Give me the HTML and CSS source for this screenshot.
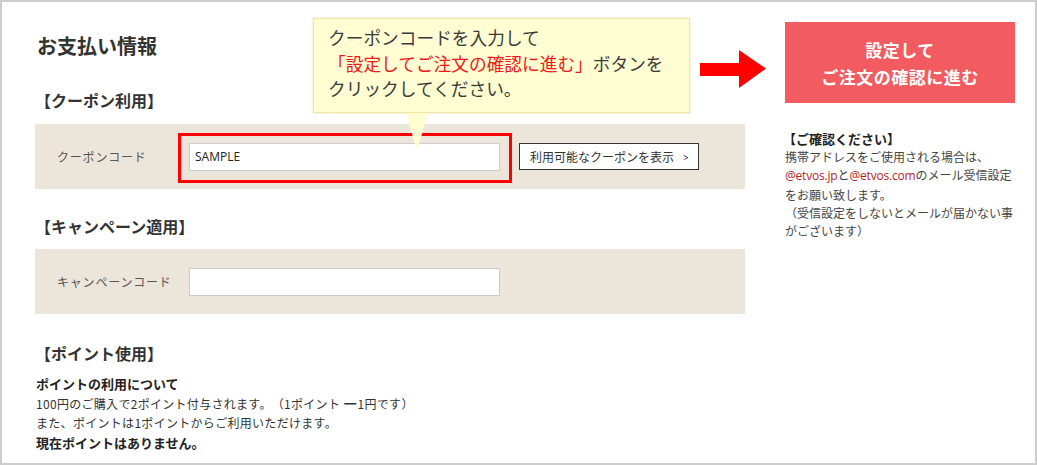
FILE: index.html
```html
<!DOCTYPE html>
<html lang="ja">
<head>
<meta charset="utf-8">
<title>お支払い情報</title>
<link rel="stylesheet" href="styles.css">
</head>
<body>
<div class="frame">
  <div class="main">
    <h1 class="title">お支払い情報</h1>

    <h2 class="sec-head">【クーポン利用】</h2>
    <div class="panel">
      <span class="panel-label">クーポンコード</span>
      <div class="highlight"><input class="code-input" type="text" value="SAMPLE"></div>
      <button class="coupon-btn" type="button">利用可能なクーポンを表示<span class="chev">&gt;</span></button>
    </div>

    <h2 class="sec-head sec-campaign">【キャンペーン適用】</h2>
    <div class="panel">
      <span class="panel-label">キャンペーンコード</span>
      <input class="code-input" type="text" value="">
    </div>

    <h2 class="sec-head sec-point">【ポイント使用】</h2>
    <div class="points">
      <p class="points-strong">ポイントの利用について</p>
      <p>100円のご購入で2ポイント付与されます。（1ポイント<span class="eq">━</span>1円です）</p>
      <p>また、ポイントは1ポイントからご利用いただけます。</p>
      <p class="points-strong">現在ポイントはありません。</p>
    </div>
  </div>

  <aside class="side">
    <button class="submit-btn" type="button">設定して<br>ご注文の確認に進む</button>
    <div class="notice">
      <p class="notice-head">【ご確認ください】</p>
      <p>携帯アドレスをご使用される場合は、<br><span class="mail">@etvos.jp</span>と<span class="mail">@etvos.com</span>のメール受信設定<br>をお願い致します。<br>（受信設定をしないとメールが届かない事<br>がございます）</p>
    </div>
  </aside>

  <div class="callout">
    クーポンコードを入力して<br><span class="callout-red">「設定してご注文の確認に進む」</span>ボタンを<br>クリックしてください。
  </div>

  <svg class="arrow" width="66" height="38" viewBox="0 0 66 38" aria-hidden="true">
    <polygon points="0,13 39,13 39,0 66,18.5 39,38 39,26 0,26" fill="#ff0000"/>
  </svg>
</div>
</body>
</html>
```

FILE: styles.css
```css
* {
  box-sizing: border-box;
}

html, body {
  margin: 0;
  padding: 0;
  background: #ffffff;
}

body {
  font-family: "Noto Sans CJK JP", "Noto Sans", sans-serif;
  color: #333333;
  text-spacing-trim: space-all;
}

p, h1, h2 {
  margin: 0;
}

.frame {
  position: relative;
  width: 1037px;
  height: 465px;
  border: 2px solid #cdcdcd;
  padding: 20px 0 0 33px;
  display: flex;
  gap: 40px;
  overflow: hidden;
}

/* ---------- main column ---------- */
.main {
  width: 710px;
  padding-top: 11px;
}

.title {
  font-size: 20px;
  line-height: 26px;
  font-weight: 700;
  color: #333333;
  padding-left: 2px;
}

.sec-head {
  font-size: 16px;
  line-height: 22px;
  font-weight: 700;
  color: #333333;
  margin-top: 30px;
  margin-bottom: 13px;
}

.sec-campaign {
  margin-top: 26px;
  margin-bottom: 12px;
}

.sec-point {
  margin-top: 28px;
  margin-bottom: 10px;
}

.panel {
  background: #ece5da;
  height: 65px;
  display: flex;
  align-items: center;
  padding-left: 22px;
}

.panel-label {
  width: 132px;
  font-size: 12px;
  letter-spacing: 0.8px;
  color: #555555;
}

.code-input {
  width: 311px;
  height: 28px;
  border: 1px solid #cccccc;
  background: #ffffff;
  padding: 0 5px;
  font-family: "Open Sans", "Noto Sans CJK JP", sans-serif;
  font-size: 12px;
  color: #222222;
  outline: none;
}

.highlight {
  position: relative;
  display: flex;
}

.highlight::after {
  content: "";
  position: absolute;
  left: -11px;
  right: -12px;
  top: -10px;
  bottom: -12px;
  border: 3px solid #ff0000;
  pointer-events: none;
}

.coupon-btn {
  margin-left: 19px;
  height: 27px;
  border: 1px solid #333333;
  background: #ffffff;
  padding: 0 9px 0 10px;
  font-family: "Noto Sans CJK JP", sans-serif;
  font-size: 12px;
  color: #333333;
  display: flex;
  align-items: center;
  gap: 9px;
}

.chev {
  font-size: 11px;
  transform: scaleX(0.8);
}

.points {
  font-size: 12px;
  line-height: 19.5px;
  letter-spacing: 0.3px;
  color: #333333;
  padding-left: 1px;
}

.points-strong {
  font-weight: 700;
  font-size: 13px;
  letter-spacing: 0;
  color: #222222;
}

.eq {
  font-weight: 700;
  margin: 0 1px 0 4px;
}

/* ---------- side column ---------- */
.side {
  width: 230px;
  display: flex;
  flex-direction: column;
}

.submit-btn {
  width: 230px;
  height: 81px;
  border: none;
  background: #f25b60;
  color: #ffffff;
  font-family: "Noto Sans CJK JP", sans-serif;
  font-size: 17px;
  font-weight: 700;
  line-height: 27px;
  letter-spacing: 0.5px;
}

.notice {
  margin-top: 27px;
  font-size: 12px;
  line-height: 18.2px;
  color: #444444;
  white-space: nowrap;
}

.notice-head {
  font-size: 13px;
  font-weight: 700;
  color: #222222;
  margin-left: -2px;
}

.mail {
  color: #b51e24;
  font-family: "Open Sans", "Noto Sans CJK JP", sans-serif;
  letter-spacing: -0.2px;
}

/* ---------- annotations ---------- */
.callout {
  position: absolute;
  left: 311px;
  top: 16px;
  width: 377px;
  height: 95px;
  background: #fffdd1;
  border: 1px solid #f1e7a4;
  box-shadow: 0 0 2px rgba(220, 205, 130, 0.6);
  padding: 6px 0 0 14px;
  font-size: 17.7px;
  line-height: 25.5px;
  color: #3a3a3a;
  white-space: nowrap;
}

.callout::after {
  content: "";
  position: absolute;
  left: 92px;
  top: 94px;
  width: 22px;
  height: 38px;
  background: #fffdd1;
  clip-path: polygon(0 0, 100% 0, 50% 100%);
}

.callout-red {
  color: #f01818;
}

.arrow {
  position: absolute;
  left: 698px;
  top: 48px;
}
```
